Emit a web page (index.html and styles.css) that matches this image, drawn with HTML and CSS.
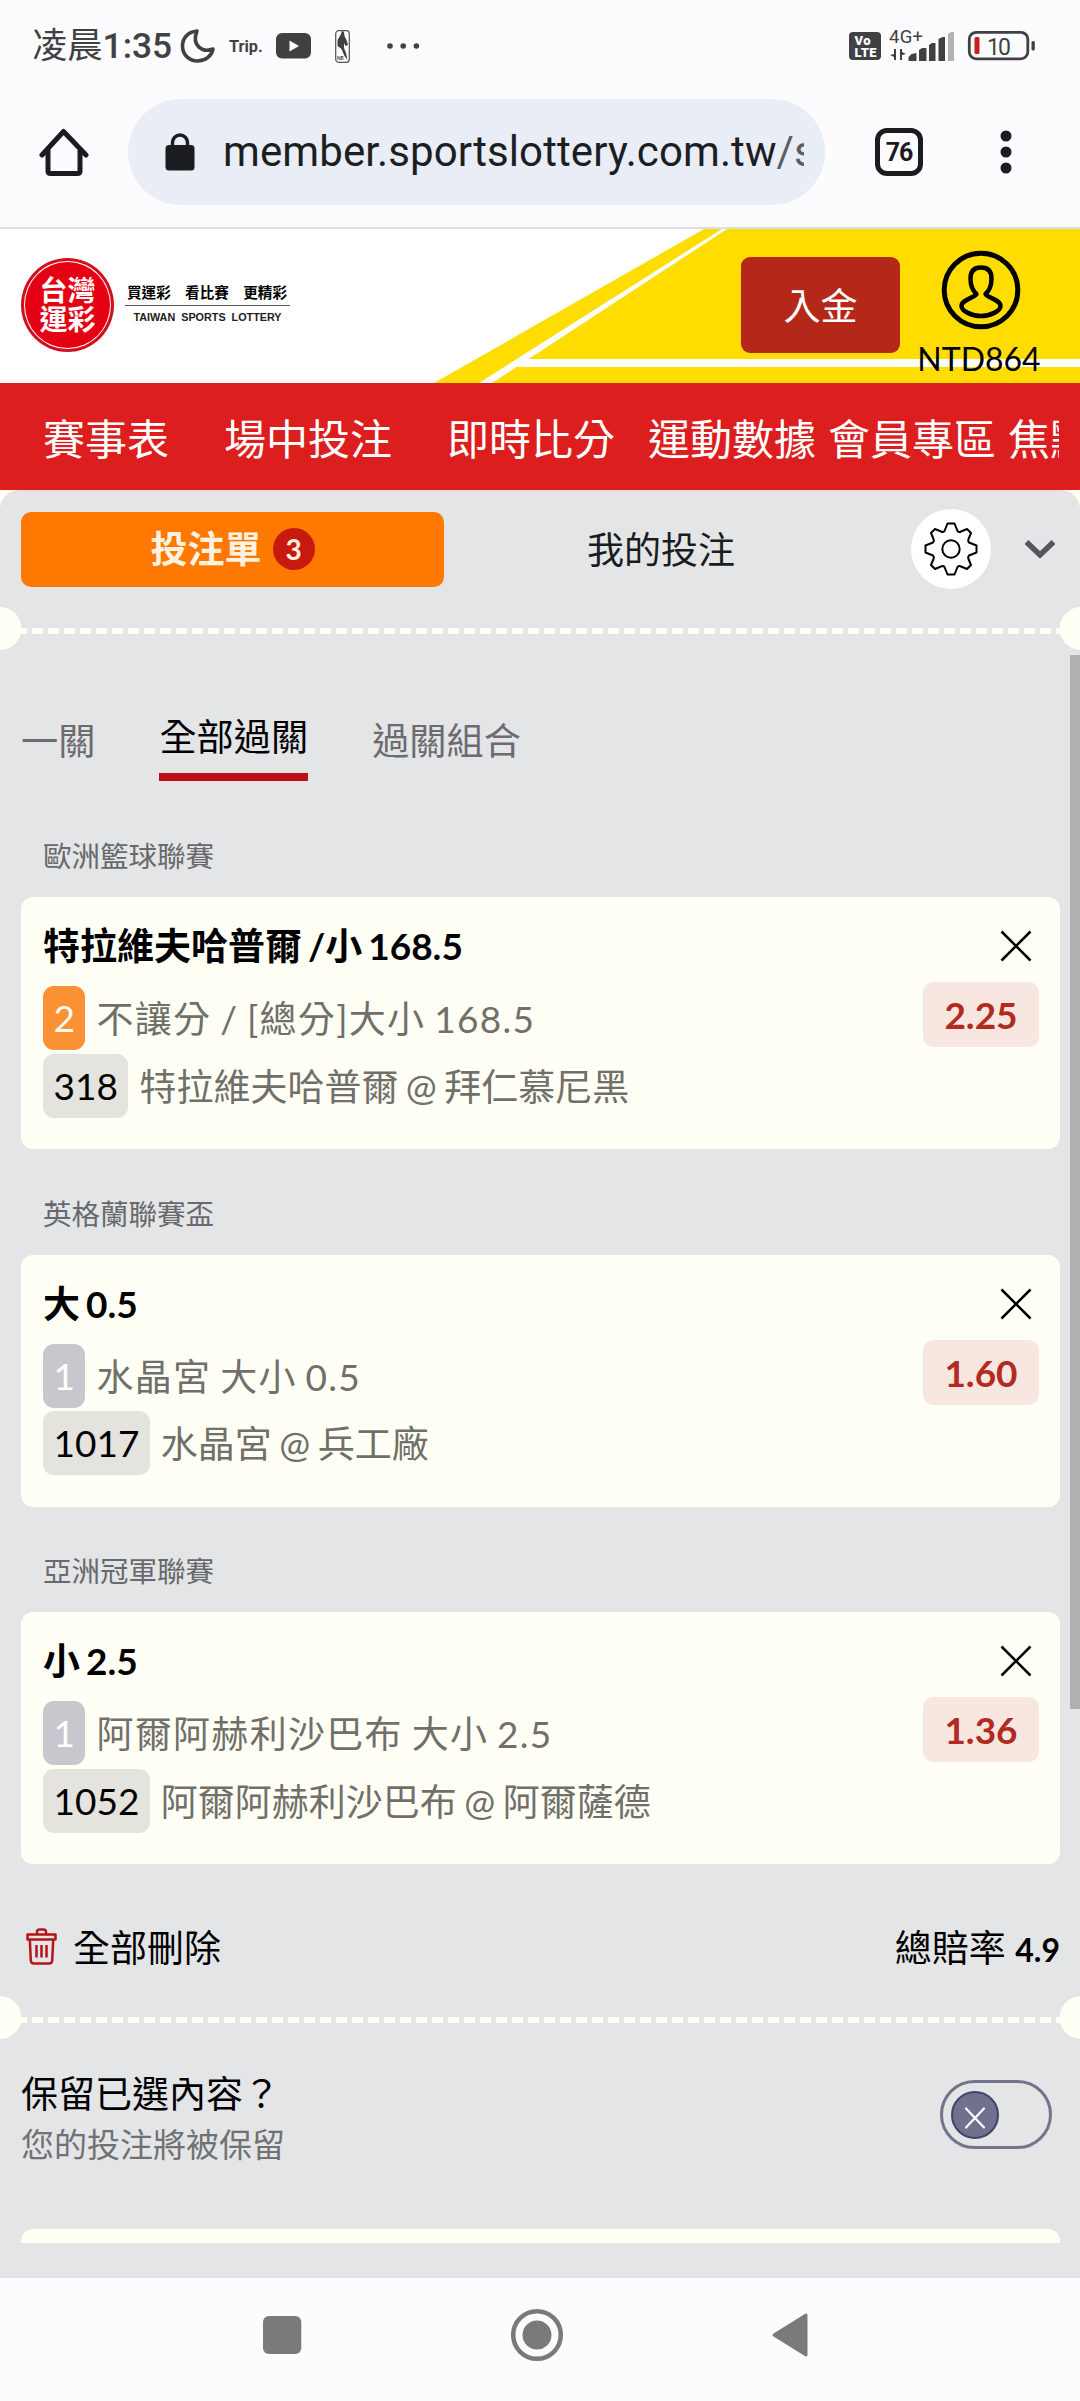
FILE: index.html
```html
<!DOCTYPE html>
<html lang="zh-Hant">

<head>
  <meta charset="utf-8">
  <title>台灣運彩</title>
  <link rel="stylesheet" href="styles.css">
</head>

<body>
  <!-- 狀態列 -->
  <div class="status">
    <span class="clock">凌晨<b>1:35</b></span>
    <svg class="moon" width="36" height="36" viewBox="0 0 36 36">
      <path d="M17 3C7 4 2.500 11 2.500 18c0 9 7 15 15 15 8 0 14-5 15.500-12-10 4-22-3-16-18z" fill="none" stroke="#414144" stroke-width="3.600" stroke-linejoin="round" />
    </svg>
    <span class="trip">Trip.</span>
    <svg class="youtube" width="35" height="26" viewBox="0 0 35 26">
      <rect width="35" height="25.500" rx="6" fill="#414144" />
      <path d="M13.500 7.500v11l9.500-5.500z" fill="#fcfcfe" />
    </svg>
    <svg class="nba" width="15" height="33" viewBox="0 0 15 33">
      <rect x=".7" y=".7" width="13.600" height="31.600" rx="3" fill="#fff" stroke="#515154" stroke-width="1.200" />
      <path d="M7 1l2 1 .5 4 2 4 1.500 5-2.500 1-1.500-3 0 5 2 5 1.500 7-3-4-3-7-4-3 0-6 3-5z" fill="#414144" />
      <text x="2" y="30" font-size="5">NB</text>
    </svg>
    <svg class="more" width="34" height="8" viewBox="0 0 34 8">
      <g fill="#414144"><circle cx="4" cy="4" r="2.800" /><circle cx="17.200" cy="4" r="2.800" /><circle cx="30.400" cy="4" r="2.800" /></g>
    </svg>
    <svg class="signal" width="190" height="34" viewBox="848 29 190 34">
      <rect x="850" y="32" width="32" height="28" rx="4" fill="#414144" />
      <text class="volte" x="855.500" y="45" textLength="16">Vo</text>
      <text class="volte" x="855.500" y="57" textLength="22">LTE</text>
      <text class="g4" x="890" y="43" textLength="34">4G+</text>
      <path d="M897 49v11h-2v-3l-4-2 4-1v-5zM901 60V49h2v3l4 2-4 1v5z" fill="#414144" />
      <g fill="#414144">
        <path d="M909.500 61v-4l3-3 5-1v8zM920 61V50l3-2h4.500v13zM930 61V45l3-2h3.500v18zM939.500 61V39l4-2h2.500v24z" />
        <path d="M949 61V34l3-2h3v29z" fill="#b3b3b6" />
      </g>
      <rect x="970.300" y="32.300" width="58.500" height="26.500" rx="7" fill="none" stroke="#414144" stroke-width="2.800" />
      <rect x="1032.500" y="41" width="3.300" height="9.500" rx="1.500" fill="#414144" />
      <rect x="975.500" y="37" width="5" height="17" rx="1.500" fill="#d21919" />
      <text class="percent" x="988" y="54.800" textLength="24">10</text>
    </svg>
  </div>

  <!-- 網址列 -->
  <div class="toolbar">
    <svg class="home" width="50" height="50" viewBox="39 127 50 50">
      <path d="M42 155L63.500 131.500 86 155M48 150v21q0 2.500 2.500 2.500h27q2.500 0 2.500-2.500v-21" fill="none" stroke="#1b1c1f" stroke-width="5" stroke-linejoin="round" stroke-linecap="round" />
    </svg>
    <div class="address">
      <svg width="30" height="38" viewBox="0 0 30 38">
        <rect x=".5" y="12" width="29" height="25.500" rx="3.500" fill="#1b1c1f" />
        <path d="M7.500 14V9.500a7.300 7.300 0 0 1 15 0V14" fill="none" stroke="#1b1c1f" stroke-width="3.400" />
      </svg>
      <span class="url">member.sportslottery.com.tw<i>/s</i></span>
    </div>
    <span class="pages">76</span>
    <svg class="dots" width="12" height="44" viewBox="0 0 12 44">
      <g fill="#1b1c1f"><circle cx="6" cy="6" r="5.500" /><circle cx="6" cy="22" r="5.500" /><circle cx="6" cy="38" r="5.500" /></g>
    </svg>
  </div>

  <!-- 網站標頭 -->
  <header class="header">
    <svg class="stripes" width="1080" height="154" viewBox="0 229 1080 154">
      <path d="M434 383L704 229H1080V383z" fill="#ffdd00" />
      <path d="M479 383h13L727 229h-5zM516 367l13-8h551v8z" fill="#fff" />
    </svg>
    <div class="logo"><span>台灣<br>運彩</span></div>
    <div class="slogan">
      <p><span>買運彩</span><span>看比賽</span><span>更精彩</span></p>
      <small>TAIWAN SPORTS LOTTERY</small>
    </div>
    <a class="deposit">入金</a>
    <div class="account">
      <svg width="80" height="80" viewBox="0 0 80 80" fill="none" stroke="#000" stroke-width="5">
        <circle cx="40" cy="40" r="36.800" />
        <path d="M40 17.500c-7 0-10.500 4-10.500 11 0 7 2 12 6 15.500-2 4-15 5.500-15 12 0 5 10 10 19.500 10s19.500-5 19.500-10c0-6.500-13-8-15-12 4-3.500 6-8.500 6-15.500 0-7-3.500-11-10.500-11z" stroke-width="4.500" stroke-linejoin="round" />
      </svg>
      <span>NTD864</span>
    </div>
  </header>

  <nav class="nav">
    <div class="nav-inner">
      <a>賽事表</a>
      <a>場中投注</a>
      <a>即時比分</a>
      <a>運動數據</a>
      <a>會員專區</a>
      <a>焦點</a>
    </div>
  </nav>

  <!-- 投注單 -->
  <main class="slip">
    <div class="slip-head">
      <a class="slip-tab active">投注單<span class="count">3</span></a>
      <a class="slip-tab">我的投注</a>
      <span class="gear">
        <svg width="54" height="54" viewBox="-27 -27 54 54" fill="none" stroke="#000" stroke-width="2" stroke-linejoin="round">
          <circle r="8.700" />
          <path d="M-3.500 -25.500H3.500L6.500 -18Q8 -16.500 10 -17.500L16 -20L20 -16L17.500 -10Q16.500 -8 18 -6.500L25.500 -3.500V3.500L18 6.500Q16.500 8 17.500 10L20 16L16 20L10 17.500Q8 16.500 6.500 18L3.500 25.500H-3.500L-6.500 18Q-8 16.500 -10 17.500L-16 20L-20 16L-17.500 10Q-16.500 8 -18 6.500L-25.500 3.500V-3.500L-18 -6.500Q-16.500 -8 -17.500 -10L-20 -16L-16 -20L-10 -17.500Q-8 -16.500 -6.500 -18z" />
        </svg>
      </span>
      <svg class="chevron" width="32" height="20" viewBox="0 0 32 20">
        <path d="M2.500 3L16 16 29.500 3" fill="none" stroke="#55565a" stroke-width="5.500" />
      </svg>
    </div>
    <div class="tear"></div>

    <div class="modes">
      <a>一關</a>
      <a class="on">全部過關</a>
      <a>過關組合</a>
    </div>

    <section class="bet">
      <h3>歐洲籃球聯賽</h3>
      <div class="card">
        <div class="info">
          <h2>特拉維夫哈普爾 /小 168.5</h2>
          <p class="market"><span class="tag orange">2</span>不讓分 / [總分]大小 168.5</p>
          <p><span class="tag">318</span>特拉維夫哈普爾 @ 拜仁慕尼黑</p>
        </div>
        <div class="side">
          <svg width="32" height="32" viewBox="0 0 32 32"><path d="M1.500 1.500l29 29M30.500 1.500l-29 29" stroke="#000" stroke-width="2.600" /></svg>
          <span class="odds">2.25</span>
        </div>
      </div>
    </section>

    <section class="bet">
      <h3>英格蘭聯賽盃</h3>
      <div class="card">
        <div class="info">
          <h2>大 0.5</h2>
          <p class="market"><span class="tag grey">1</span>水晶宮 大小 0.5</p>
          <p><span class="tag">1017</span>水晶宮 @ 兵工廠</p>
        </div>
        <div class="side">
          <svg width="32" height="32" viewBox="0 0 32 32"><path d="M1.500 1.500l29 29M30.500 1.500l-29 29" stroke="#000" stroke-width="2.600" /></svg>
          <span class="odds">1.60</span>
        </div>
      </div>
    </section>

    <section class="bet">
      <h3>亞洲冠軍聯賽</h3>
      <div class="card">
        <div class="info">
          <h2>小 2.5</h2>
          <p class="market"><span class="tag grey">1</span>阿爾阿赫利沙巴布 大小 2.5</p>
          <p><span class="tag">1052</span>阿爾阿赫利沙巴布 @ 阿爾薩德</p>
        </div>
        <div class="side">
          <svg width="32" height="32" viewBox="0 0 32 32"><path d="M1.500 1.500l29 29M30.500 1.500l-29 29" stroke="#000" stroke-width="2.600" /></svg>
          <span class="odds">1.36</span>
        </div>
      </div>
    </section>

    <div class="total">
      <svg width="31" height="37" viewBox="0 0 31 37" fill="none" stroke="#b4141a" stroke-width="2.500" stroke-linejoin="round">
        <path d="M1.500 6.500h28v5h-28zM11 6.500V4q0-2.500 2.500-2.500h4Q20 1.500 20 4v2.500M3.800 11.500l1 21q.2 3 3 3h15.400q2.800 0 3-3l1-21" />
        <path d="M10.500 17v12.500M15.500 17v12.500M20.500 17v12.500" />
      </svg>
      <a>全部刪除</a>
      <span class="rate">總賠率 <b>4.9</b></span>
    </div>
    <div class="tear"></div>

    <div class="keep">
      <div>
        <p>保留已選內容？</p>
        <p class="hint">您的投注將被保留</p>
      </div>
      <span class="switch">
        <span class="knob"><svg width="20" height="22" viewBox="0 0 20 22"><path d="M1 1.500l18 19M19 1.500l-18 19" stroke="#fff" stroke-width="2.200" stroke-linecap="round" /></svg></span>
      </span>
    </div>
    <div class="next-card"></div>
    <div class="scrollbar"></div>
  </main>

  <!-- 系統導覽列 -->
  <footer class="system">
    <svg width="546" height="54" viewBox="263 2308 546 54">
      <g fill="#7a7a7a">
        <rect x="263" y="2316" width="38.300" height="38" rx="6" />
        <circle cx="537" cy="2335" r="14.500" />
        <path d="M774 2335L806 2315V2355z" stroke="#7a7a7a" stroke-width="3" stroke-linejoin="round" />
      </g>
      <circle cx="537" cy="2335" r="23.800" fill="none" stroke="#7a7a7a" stroke-width="4.500" />
    </svg>
  </footer>
</body>

</html>
```
FILE: styles.css
```css
* {
  box-sizing: border-box;
}

body {
  margin: 0;
  width: 1080px;
  height: 2401px;
  overflow: hidden;
  background: #fcfcfe;
  color: #000;
  font-family: Lato, "Noto Sans CJK TC", sans-serif;
  font-size: 37px;
}

h2,
h3,
p {
  margin: 0;
}

svg {
  display: block;
  flex: none;
}

/* 狀態列 */
.status {
  display: flex;
  align-items: center;
  height: 92px;
  padding-left: 32px;
  color: #414144;
  font-family: Roboto, "Noto Sans CJK TC", sans-serif;
}

.clock {
  width: 148px;
  font-size: 35.3px;
  line-height: 40px;
  white-space: nowrap;
}

.clock b {
  font-weight: 500;
}

.trip {
  width: 33px;
  margin-left: 13px;
  font-size: 16.3px;
  font-weight: 700;
}

.youtube {
  margin-left: 14px;
}

.nba {
  margin-left: 24px;
}

.more {
  margin-left: 36px;
}

.signal {
  margin-left: 427px;
}

.volte {
  fill: #fff;
  font-size: 13px;
  font-weight: 900;
}

.g4 {
  fill: #414144;
  font-size: 18.5px;
}

.percent {
  fill: #414144;
  font-size: 23px;
}

/* 網址列 */
.toolbar {
  display: flex;
  align-items: center;
  height: 137px;
  padding: 0 68px 15px 39px;
  border-bottom: 2px solid #dcdee6;
}

.address {
  display: flex;
  align-items: center;
  width: 697px;
  height: 106px;
  margin-left: 39px;
  padding: 0 21px 0 37px;
  border-radius: 53px;
  background: #e9edf5;
}

.url {
  flex: 1;
  margin-left: 28px;
  overflow: hidden;
  color: #1b1e22;
  font: 42px/54px Roboto, sans-serif;
  letter-spacing: 0.1px;
  white-space: nowrap;
}

.url i {
  color: #5a5d64;
  font-style: normal;
}

.pages {
  width: 48px;
  height: 48px;
  margin-left: 50px;
  border: 5px solid #1b1c1f;
  border-radius: 12px;
  color: #1b1c1f;
  font: 700 25px/39px Roboto, sans-serif;
  letter-spacing: -1px;
  text-align: center;
}

.dots {
  margin-left: auto;
}

/* 網站標頭 */
.header {
  position: relative;
  display: flex;
  height: 154px;
  padding-left: 21px;
  background: #fff;
}

.stripes {
  position: absolute;
  top: 0;
  left: 0;
}

.logo {
  width: 93px;
  height: 94px;
  margin-top: 29px;
  padding: 3px;
  border-radius: 50%;
  background: #d2101c;
}

.logo span {
  display: block;
  height: 88px;
  padding-top: 14px;
  border: 1.5px solid #fff;
  border-radius: 50%;
  background: #e60014;
  color: #fff;
  font-size: 28px;
  font-weight: 700;
  line-height: 29px;
  text-align: center;
}

.slogan {
  width: 165px;
  margin: 52px 0 0 11px;
}

.slogan p {
  display: flex;
  justify-content: space-between;
  height: 25px;
  padding: 0 3px 0 2px;
  border-bottom: 1px solid #555;
  font-size: 14.6px;
  font-weight: 700;
  line-height: 24px;
}

.slogan small {
  display: block;
  padding-top: 5px;
  color: #222;
  font: 700 10.8px/12px "Liberation Sans", sans-serif;
  text-align: center;
  white-space: nowrap;
  word-spacing: 3px;
}

.deposit {
  position: relative;
  width: 159px;
  height: 96px;
  margin: 28px 0 0 451px;
  border-radius: 9px;
  background: #b4281a;
  color: #fff;
  font-size: 37px;
  line-height: 98px;
  text-align: center;
}

.account {
  position: relative;
  width: 124px;
  margin: 21px 0 0 17px;
  text-align: center;
}

.account svg {
  margin: 0 auto 0 24px;
}

.account span {
  display: block;
  padding-top: 9px;
  font-size: 32px;
  line-height: 40px;
}

.nav {
  height: 107px;
  padding: 0 21px;
  background: #dc1e1e;
}

.nav-inner {
  display: flex;
  padding-left: 22px;
  overflow: hidden;
  color: #fff;
  font-size: 42px;
  line-height: 112px;
  height: 107px;
  white-space: nowrap;
}

.nav a:nth-child(2),
.nav a:nth-child(3) {
  margin-left: 55px;
}

.nav a:nth-child(4) {
  margin-left: 33px;
}

.nav a:nth-child(5),
.nav a:nth-child(6) {
  margin-left: 12px;
}

/* 投注單 */
.slip {
  position: relative;
  height: 1788px;
  border-top: 1px solid #ffd0d0;
  border-bottom: 2px solid #dfe3ea;
  border-radius: 20px 20px 0 0;
  background: #e4e5e7;
  box-shadow: 0 -1px 0 10px #fffef5;
  clip-path: inset(0);
}

.slip-head {
  display: flex;
  align-items: center;
  height: 116px;
  padding: 0 24px 0 21px;
}

.slip-tab {
  width: 434px;
  height: 75px;
  color: #1a1c20;
  line-height: 76px;
  text-align: center;
}

.slip-tab.active {
  display: flex;
  align-items: center;
  justify-content: center;
  width: 423px;
  border-radius: 10px;
  background: #ff7800;
  color: #fff3e0;
  font-weight: 700;
}

.count {
  width: 42px;
  height: 42px;
  margin-left: 11px;
  border-radius: 50%;
  background: #c81910;
  font-size: 28px;
  line-height: 42px;
  text-align: center;
}

.gear {
  display: flex;
  align-items: center;
  justify-content: center;
  width: 80px;
  height: 80px;
  margin-left: 33px;
  border-radius: 50%;
  background: #fff;
}

.chevron {
  margin-left: auto;
}

.tear {
  height: 43px;
  background:
    radial-gradient(circle at 0 50%, #fffff5 21px, transparent 21.8px),
    radial-gradient(circle at 1081px 50%, #fffff5 21px, transparent 21.8px),
    repeating-linear-gradient(90deg, #fffff5 0 11px, transparent 11px 16px) 0 21px / 100% 6px no-repeat;
}

.modes {
  display: flex;
  gap: 64px;
  height: 131px;
  padding: 59px 21px 0;
  color: #6b6c70;
  font-size: 37.2px;
  line-height: 56px;
}

.modes a {
  padding-top: 4px;
}

.modes .on {
  padding: 0 0 8px;
  border-bottom: 8px solid #b91016;
  color: #000;
}

.bet {
  margin: 0 20px 44.7px 21px;
}

.modes + .bet {
  margin-top: 55px;
}

.bet h3 {
  margin-bottom: 21px;
  padding-left: 22px;
  color: #68696c;
  font-size: 28.5px;
  font-weight: 400;
  line-height: 40px;
}

.card {
  display: flex;
  justify-content: space-between;
  height: 252px;
  padding: 16px 21px 0 22px;
  border-radius: 12px;
  background: #fffff6;
}

.info h2 {
  height: 73px;
  font-size: 37px;
  font-weight: 700;
  line-height: 66px;
  word-spacing: -3px;
}

.info p {
  display: flex;
  height: 64px;
  margin-bottom: 3.5px;
  color: #716f69;
  line-height: 65px;
  white-space: pre;
  word-spacing: -2px;
}

.info .market {
  letter-spacing: 1.3px;
  line-height: 66px;
}

.tag {
  margin-right: 11px;
  padding: 0 10.5px;
  border-radius: 11px;
  background: #e5e3de;
  color: #000;
  letter-spacing: 0;
  line-height: 64px;
}

.tag.orange {
  background: #fa9135;
  color: #fffff5;
}

.tag.grey {
  background: #c8c7ce;
  color: #fff;
}

.side {
  display: flex;
  flex-direction: column;
  align-items: flex-end;
  padding-top: 17px;
}

.side svg {
  margin-right: 7px;
}

.odds {
  width: 116px;
  height: 65px;
  margin-top: 20px;
  border-radius: 10px;
  background: #f7e7e0;
  color: #b22a20;
  font-weight: 700;
  line-height: 65px;
  text-align: center;
}

.total {
  display: flex;
  align-items: center;
  height: 77px;
  margin-top: 55px;
  padding: 0 20px 23px 26px;
}

.total a {
  margin-left: 16px;
}

.rate {
  margin-left: auto;
}

.rate b {
  font-size: 32px;
}

.keep {
  display: flex;
  justify-content: space-between;
  height: 190px;
  padding: 30px 28px 0 21px;
  line-height: 50px;
}

.keep .hint {
  color: #707174;
  font-size: 33px;
}

.switch {
  width: 112px;
  height: 69px;
  margin-top: 11px;
  padding: 8px;
  border: 3px solid #74738b;
  border-radius: 35px;
}

.knob {
  display: flex;
  align-items: center;
  justify-content: center;
  width: 48px;
  height: 48px;
  padding-top: 5px;
  border: 2px solid #44446a;
  border-radius: 50%;
  background: #71708f;
}

.next-card {
  height: 14px;
  margin: 0 20px 0 21px;
  border-radius: 12px 12px 0 0;
  background: #fffff3;
}

.scrollbar {
  position: absolute;
  top: 164px;
  right: 0;
  width: 10px;
  height: 1054px;
  background: #afb1b3;
}

/* 系統導覽列 */
.system {
  display: flex;
  height: 123px;
  padding: 30px 0 0 263px;
}
```
